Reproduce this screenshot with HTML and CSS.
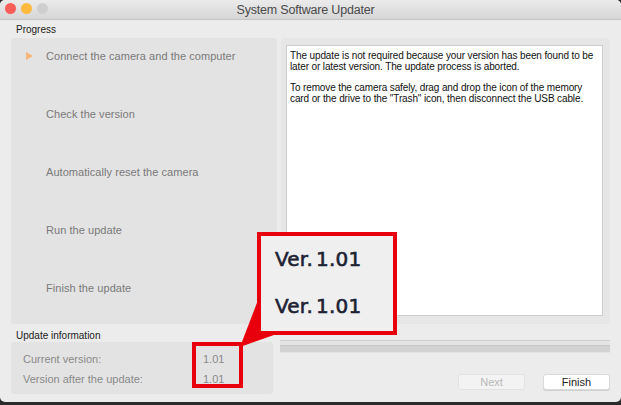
FILE: index.html
```html
<!DOCTYPE html>
<html>
<head>
<meta charset="utf-8">
<link rel="stylesheet" href="styles.css">
</head>
<body>
<div class="window">
  <div class="titlebar">
    <div class="lights">
      <span class="light red"></span>
      <span class="light yellow"></span>
      <span class="light gray"></span>
    </div>
    <div class="title">System Software Updater</div>
  </div>
  <div class="content">
    <div class="section-label">Progress</div>
    <div class="main">
      <div class="steps">
        <div class="step current"><span class="arrow"></span>Connect the camera and the computer</div>
        <div class="step">Check the version</div>
        <div class="step">Automatically reset the camera</div>
        <div class="step">Run the update</div>
        <div class="step">Finish the update</div>
      </div>
      <div class="message-wrap">
        <div class="message">
          <p>The update is not required because your version has been found to be later or latest version. The update process is aborted.</p>
          <p>To remove the camera safely, drag and drop the icon of the memory card or the drive to the "Trash" icon, then disconnect the USB cable.</p>
        </div>
      </div>
    </div>
    <div class="lower">
      <div class="info-col">
        <div class="section-label small">Update information</div>
        <div class="info">
          <span>Current version:</span><span>1.01</span>
          <span>Version after the update:</span><span>1.01</span>
        </div>
      </div>
      <div class="action-col">
        <div class="progress"><div class="progress-inner"></div></div>
        <div class="buttons">
          <button class="btn disabled">Next</button>
          <button class="btn">Finish</button>
        </div>
      </div>
    </div>
  </div>

  <svg class="wedge" width="621" height="405" viewBox="0 0 621 405">
    <polygon points="240,347 258,300 258,335 274,335" fill="#e8000d"/>
  </svg>
  <div class="callout">
    <div class="ver">Ver.<span class="num">1.01</span></div>
    <div class="ver">Ver.<span class="num">1.01</span></div>
  </div>
  <div class="mark"></div>
</div>
</body>
</html>
```
FILE: styles.css
```css
* { box-sizing: border-box; }
html, body { margin: 0; padding: 0; }
body {
  width: 621px;
  height: 405px;
  background: #2b2b2b;
  font-family: "Liberation Sans", Arial, sans-serif;
  overflow: hidden;
}
.window {
  position: relative;
  width: 621px;
  height: 402px;
  background: #ececec;
  border-radius: 5px;
  overflow: hidden;
}
.titlebar {
  position: relative;
  height: 20px;
  background: linear-gradient(#ebebeb, #d6d6d6);
  border-bottom: 1px solid #c4c4c4;
  display: flex;
  align-items: center;
  justify-content: center;
}
.lights {
  position: absolute;
  left: 5px;
  top: 3px;
  display: flex;
  gap: 5px;
}
.light {
  width: 11px;
  height: 11px;
  border-radius: 50%;
  display: block;
}
.light.red { background: #fb5d58; }
.light.yellow { background: #fdba3e; }
.light.gray { background: #cfcfcf; }
.title {
  font-size: 12.5px;
  color: #4a4a4a;
  margin-right: 10px;
  margin-top: 1px;
  letter-spacing: -0.2px;
}
.content {
  padding: 0 11px;
}
.section-label {
  font-size: 10px;
  color: #222;
  height: 15px;
  line-height: 13px;
  padding-left: 5px;
  margin-top: 3px;
}
.section-label.small {
  margin-top: 0;
  height: 12px;
  line-height: 12px;
}
.main {
  display: flex;
  gap: 4px;
  height: 286px;
}
.steps {
  width: 266px;
  background: #e3e3e3;
  border-radius: 3px;
  padding: 11px 0 0 0;
}
.step {
  position: relative;
  height: 14px;
  line-height: 14px;
  margin-bottom: 44px;
  padding-left: 35px;
  font-size: 11px;
  color: #7a7a7a;
  letter-spacing: 0.05px;
}
.arrow {
  position: absolute;
  left: 15px;
  top: 3px;
  width: 0;
  height: 0;
  border-top: 4px solid transparent;
  border-bottom: 4px solid transparent;
  border-left: 7px solid #f3b57a;
}
.message-wrap {
  width: 329px;
  background: #e6e6e6;
  border-radius: 4px;
  padding: 7px 7px 8px 5px;
}
.message {
  height: 100%;
  background: #fff;
  border: 1px solid #cdcdcd;
  padding: 4px 2px 2px 3px;
  font-size: 10px;
  line-height: 11px;
  color: #111;
  letter-spacing: -0.12px;
}
.message p { margin: 0 0 10px 0; }
.lower {
  display: flex;
  margin-top: 6px;
}
.info-col { width: 262px; }
.info {
  height: 52px;
  background: #e3e3e3;
  border-radius: 3px;
  padding: 10px 0 0 12px;
  display: grid;
  grid-template-columns: 180px auto;
  grid-auto-rows: 14px;
  row-gap: 6px;
  font-size: 11px;
  line-height: 14px;
  color: #8a8a8a;
}
.action-col {
  flex: 1;
  padding-left: 7px;
  padding-top: 10px;
}
.progress {
  height: 13px;
  border-top: 1px solid #cfcfcf;
  background: #e4e4e4;
  padding-top: 4px;
}
.progress-inner {
  height: 7px;
  background: #d3d3d3;
  border-top: 1px solid #c6c6c6;
}
.buttons {
  display: flex;
  justify-content: flex-end;
  gap: 18px;
  margin-top: 21px;
}
.btn {
  width: 67px;
  height: 16px;
  padding: 0;
  border: 1px solid #dadada;
  border-radius: 3px;
  background: #fff;
  font-family: "Liberation Sans", Arial, sans-serif;
  font-size: 11px;
  line-height: 14px;
  color: #222;
  box-shadow: 0 1px 0 #cfcfcf;
}
.btn.disabled {
  background: #f3f3f3;
  color: #b8b8b8;
  border-color: #e2e2e2;
  box-shadow: none;
}
.wedge {
  position: absolute;
  left: 0;
  top: 0;
  pointer-events: none;
}
.callout {
  position: absolute;
  left: 257px;
  top: 232px;
  width: 140px;
  height: 103px;
  border: 4px solid #e8000d;
  background: #efefef;
  padding: 11px 0 0 14px;
}
.ver {
  font-family: "DejaVu Sans", Verdana, sans-serif;
  font-size: 20px;
  line-height: 24px;
  height: 47px;
  color: #1d2233;
  -webkit-text-stroke: 0.6px #1d2233;
  letter-spacing: 0.2px;
}
.num { margin-left: 3px; }
.mark {
  position: absolute;
  left: 192px;
  top: 342px;
  width: 51px;
  height: 46px;
  border: 4px solid #e8000d;
}
```
